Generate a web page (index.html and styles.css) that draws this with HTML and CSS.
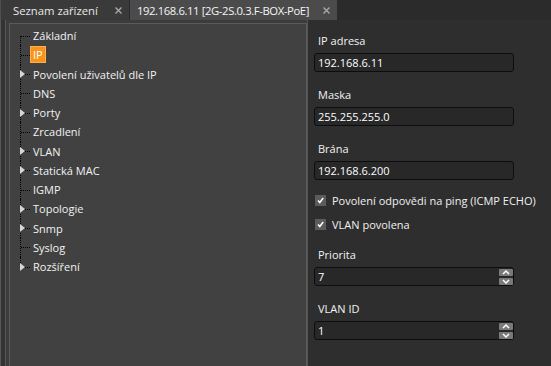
FILE: index.html
```html
<!DOCTYPE html>
<html lang="cs">
<head>
    <meta charset="UTF-8">
    <title>192.168.6.11 [2G-2S.0.3.F-BOX-PoE]</title>
    <link rel="stylesheet" href="styles.css">
</head>
<body>
    <div class="tabs">
        <div class="tab">
            <span>Seznam zařízení</span>
            <svg class="close" width="7" height="7" viewBox="0 0 7 7"><path d="M0.5 0.5L6.5 6.5M6.5 0.5L0.5 6.5"/></svg>
        </div>
        <div class="tab active">
            <span class="tab-title">192.168.6.11 [2G-2S.0.3.F-BOX-PoE]</span>
            <svg class="close" width="7" height="7" viewBox="0 0 7 7"><path d="M0.5 0.5L6.5 6.5M6.5 0.5L0.5 6.5"/></svg>
        </div>
    </div>
    <div class="main">
        <div class="side">
            <div class="pane">
                <ul class="tree">
                    <li class="node first"><span class="twig"></span><span class="label">Základní</span></li>
                    <li class="node"><span class="twig"></span><span class="label selected">IP</span></li>
                    <li class="node"><span class="twig"><i class="expander"></i></span><span class="label">Povolení uživatelů dle IP</span></li>
                    <li class="node"><span class="twig"></span><span class="label">DNS</span></li>
                    <li class="node"><span class="twig"><i class="expander"></i></span><span class="label">Porty</span></li>
                    <li class="node"><span class="twig"></span><span class="label">Zrcadlení</span></li>
                    <li class="node"><span class="twig"><i class="expander"></i></span><span class="label">VLAN</span></li>
                    <li class="node"><span class="twig"><i class="expander"></i></span><span class="label">Statická MAC</span></li>
                    <li class="node"><span class="twig"></span><span class="label">IGMP</span></li>
                    <li class="node"><span class="twig"><i class="expander"></i></span><span class="label">Topologie</span></li>
                    <li class="node"><span class="twig"><i class="expander"></i></span><span class="label">Snmp</span></li>
                    <li class="node"><span class="twig"></span><span class="label">Syslog</span></li>
                    <li class="node last"><span class="twig"><i class="expander"></i></span><span class="label">Rozšíření</span></li>
                </ul>
            </div>
        </div>
        <div class="form">
            <div class="field">
                <label class="field-label" for="ip">IP adresa</label>
                <input class="input" type="text" id="ip" value="192.168.6.11">
            </div>
            <div class="field">
                <label class="field-label" for="mask">Maska</label>
                <input class="input" type="text" id="mask" value="255.255.255.0">
            </div>
            <div class="field tight">
                <label class="field-label" for="gw">Brána</label>
                <input class="input" type="text" id="gw" value="192.168.6.200">
            </div>
            <div class="checks">
                <div class="check">
                    <span class="box"><svg width="11" height="11" viewBox="0 0 11 11"><path d="M3 5.5L4.8 7.5L8.2 3"/></svg></span>
                    <span>Povolení odpovědi na ping (ICMP ECHO)</span>
                </div>
                <div class="check">
                    <span class="box"><svg width="11" height="11" viewBox="0 0 11 11"><path d="M3 5.5L4.8 7.5L8.2 3"/></svg></span>
                    <span>VLAN povolena</span>
                </div>
            </div>
            <div class="field">
                <label class="field-label">Priorita</label>
                <div class="input spin">
                    <span class="spin-value">7</span>
                    <div class="spin-btns">
                        <span class="spin-btn"><svg width="14" height="7" viewBox="0 0 14 7"><path d="M4 5L7 2L10 5"/></svg></span>
                        <span class="spin-btn"><svg width="14" height="7" viewBox="0 0 14 7"><path d="M4 2L7 5L10 2"/></svg></span>
                    </div>
                </div>
            </div>
            <div class="field">
                <label class="field-label">VLAN ID</label>
                <div class="input spin">
                    <span class="spin-value">1</span>
                    <div class="spin-btns">
                        <span class="spin-btn"><svg width="14" height="7" viewBox="0 0 14 7"><path d="M4 5L7 2L10 5"/></svg></span>
                        <span class="spin-btn"><svg width="14" height="7" viewBox="0 0 14 7"><path d="M4 2L7 5L10 2"/></svg></span>
                    </div>
                </div>
            </div>
        </div>
    </div>
</body>
</html>
```

FILE: styles.css
```css
body {
    margin: 0;
    height: 366px;
    overflow: hidden;
    background-color: #2b2b2b;
    font-family: 'Open Sans', 'Noto Sans', sans-serif;
    font-size: 11px;
    color: #f0f0f0;
}
.tabs {
    display: flex;
    height: 20px;
    border-left: 1px solid #4e4e4e;
}
.tab {
    display: flex;
    align-items: center;
    gap: 17px;
    padding: 0 7px 0 12px;
    background-color: #3a3a3a;
    color: #e8e8e8;
    font-size: 11.3px;
}
.tab.active {
    margin-left: 1px;
    padding-left: 7px;
    gap: 14px;
    background-color: #4b4b4b;
    color: #f4f4f4;
}
.tab-title {
    letter-spacing: -0.4px;
}
.close path {
    stroke: #a8a8a8;
    stroke-width: 1.4;
    fill: none;
}
.main {
    display: flex;
    height: 346px;
}
.side {
    width: 307px;
    box-sizing: border-box;
    padding-left: 4px;
    background-color: #333;
    border-left: 1px solid #575757;
}
.pane {
    height: 100%;
    box-sizing: border-box;
    padding: 3px 0 0 3px;
    background-color: #3c3c3c;
    border-left: 1px solid #575757;
}
.tree {
    height: 100%;
    box-sizing: border-box;
    margin: 0;
    padding: 2px 0 0 0;
    list-style: none;
    background-color: #414141;
    border: 1px solid #5a5a5a;
    border-bottom: none;
}
.node {
    display: flex;
    align-items: center;
    height: 19.25px;
    padding-left: 10px;
}
.twig {
    position: relative;
    width: 10px;
    align-self: stretch;
}
.twig::before {
    content: '';
    position: absolute;
    left: 0;
    top: 0;
    bottom: 0;
    border-left: 1px dotted #000;
}
.node.first .twig::before {
    top: 50%;
}
.node.last .twig::before {
    bottom: 50%;
}
.twig::after {
    content: '';
    position: absolute;
    left: 1px;
    right: 0;
    top: 50%;
    border-top: 1px dotted #000;
}
.expander {
    position: absolute;
    left: 0;
    top: 50%;
    margin-top: -4px;
    width: 0;
    height: 0;
    border-left: 5px solid #d6d6d6;
    border-top: 4px solid transparent;
    border-bottom: 4px solid transparent;
    z-index: 1;
}
.label {
    padding: 0 2px;
    line-height: 15px;
    border: 1px solid transparent;
    color: #f2f2f2;
}
.label.selected {
    background-color: #f7941d;
    border-color: #ffb04a;
    color: #fff;
}
.form {
    flex: 1;
    padding: 13px 0 0 6px;
    background-color: #2e2e2e;
    border-left: 1px solid #555;
}
.field {
    margin-bottom: 15px;
}
.field.tight {
    margin-bottom: 8px;
}
.field-label {
    display: block;
    height: 16px;
    line-height: 16px;
    padding-left: 4px;
    margin-bottom: 4px;
    color: #f2f2f2;
}
.input {
    display: block;
    width: 200px;
    height: 19px;
    box-sizing: border-box;
    margin: 0;
    padding: 0 3px;
    border: 1px solid #0d0d0d;
    border-radius: 3px;
    background-color: #282828;
    color: #fff;
    font: inherit;
    outline: none;
}
.checks {
    margin-bottom: 11px;
}
.check {
    display: flex;
    align-items: center;
    height: 24px;
}
.box {
    display: flex;
    width: 11px;
    height: 11px;
    margin: 0 6px 0 1px;
    background-color: #5c5c5c;
}
.box path {
    stroke: #fff;
    stroke-width: 1.5;
    fill: none;
}
.spin {
    display: flex;
    align-items: center;
    padding-right: 0;
}
.spin-value {
    flex: 1;
    line-height: 17px;
}
.spin-btns {
    display: flex;
    flex-direction: column;
    gap: 2px;
}
.spin-btn {
    display: flex;
    width: 14px;
    height: 7px;
    border-radius: 1px;
    background-color: #7a7a7a;
}
.spin-btn path {
    stroke: #fff;
    stroke-width: 1.5;
    fill: none;
}
```
